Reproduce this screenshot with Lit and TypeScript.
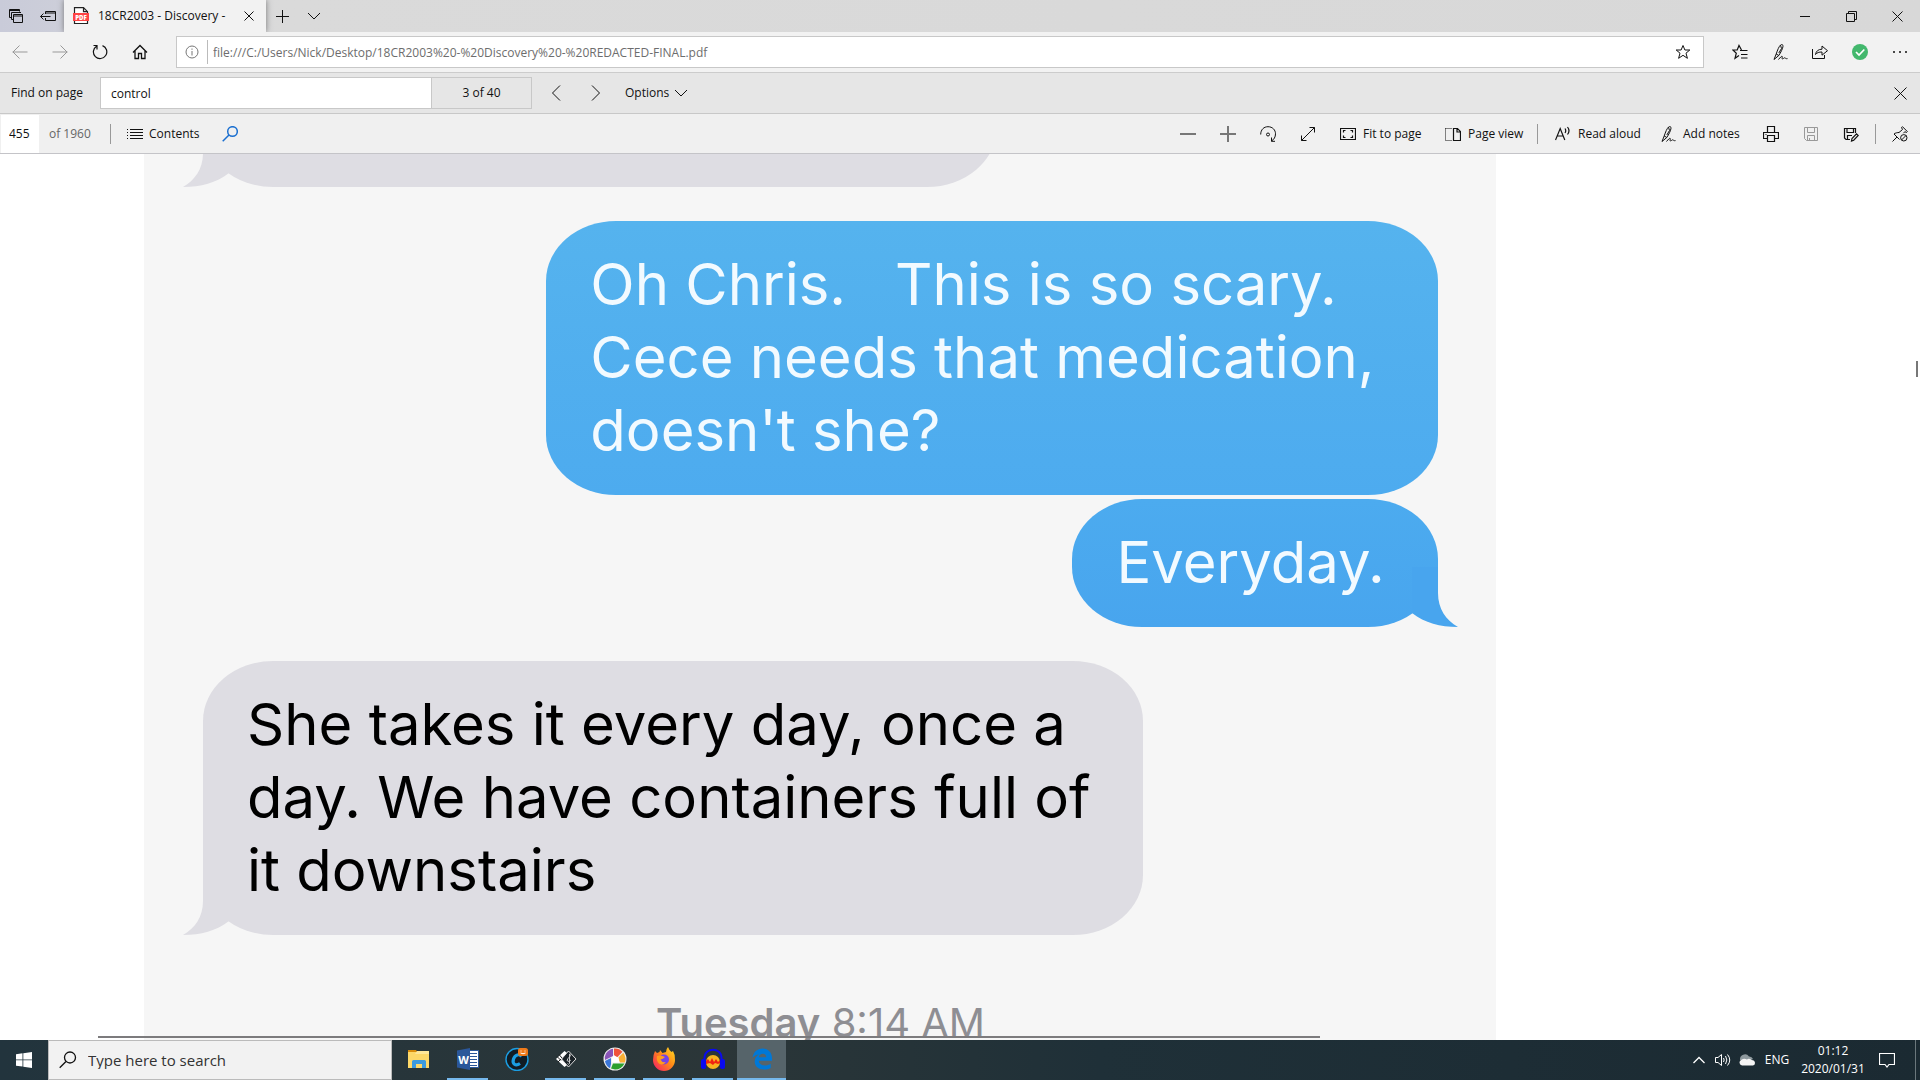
import { LitElement, html, css, svg } from "lit";
import { customElement } from "lit/decorators.js";

const line = (size: number, body: unknown, cls = "") => html`<svg
  class="ico ${cls}"
  width=${size}
  height=${size}
  viewBox="0 0 ${size} ${size}"
  aria-hidden="true"
>${body}</svg>`;

const cross = (s: number) => line(s, svg`<path d="M.5 .5L${s - 0.5} ${s - 0.5}M${s - 0.5} .5L.5 ${s - 0.5}"/>`);

const penPath = svg`<path d="M2 15.5L4.2 10C5.5 6 7 2.4 8.6 1C9.8 .1 11.2 .6 11 2.2C10.8 4.6 8.8 8.4 6.8 11.5L2 15.5M4.2 10L6.8 11.5M8.5 1.2L9.5 4.5L6.8 9"/><path d="M6.5 15.5C8.5 13.2 9.7 11.8 10.2 12.4C10.7 13 9.6 14.4 10.3 14.9C11 15.4 12 13.6 12.8 13.8C13.5 14 13.8 15 15.5 14.6"/>`;

const icons = {
  cascade: line(16, svg`<path d="M3.5 9.5H1.5V1.5H11.5V3.5M1.5 2.5H11.5M5.5 11.5H3.5V4.500H13M5.5 6.5H14.5V14.5H5.5ZM5.5 8H14.5"/>`),
  aside: line(16, svg`<path d="M5.5 6V3.5H15.5V12.5H5.5V10M5.5 5H15.5M.5 8.5H10.5M3.5 5.5L.5 8.5L3.5 11.5"/>`),
  plus: line(14, svg`<path d="M7.5 1V14M1 7.5H14"/>`),
  chevDown: line(14, svg`<path d="M1 4L7 10L13 4"/>`),
  min: line(11, svg`<path d="M0 5.5H10"/>`),
  restore: line(11, svg`<path d="M.5 2.5H8.5V10.5H.5ZM2.5 2.5V.5H10.5V8.5H8.5"/>`),
  back: line(16, svg`<path d="M.5 8H15.5M7.5 1.5L1 8L7.5 14.5"/>`, "dim"),
  fwd: line(16, svg`<path d="M.5 8H15.5M8.5 1.5L15 8L8.5 14.5"/>`, "dim"),
  refresh: line(16, svg`<path d="M4.5 2.2A6.7 6.7 0 1 0 10.5 1.6M1.5 1.5H5V5.5" stroke-width="1.2"/>`),
  home: line(16, svg`<path d="M1 8.5L8 1.5L15 8.5M3 7V14.5H6.5V9.5H9.5V14.5H13V7" stroke-width="1.3"/>`),
  info: line(14, svg`<circle cx="7" cy="7" r="6"/><path d="M7 6V10.5M7 3.5V4.8"/>`),
  star: line(16, svg`<path d="M8 1.5L9.9 6H14.8L11 9.2L12.4 14.3L8 11.3L3.6 14.3L5 9.2L1.2 6H6.1Z"/>`),
  favs: line(16, svg`<path d="M9.5 6L7 1.5L5.2 6H.8L4.3 9.2L3 14.3L7 11.6M8 6.5H15.5M9 10.5H15.5M9 14H15.5" stroke-width="1.2"/>`),
  pen: line(16, penPath),
  share: line(16, svg`<path d="M.5 5V14.5H12.5V11M3.5 10.5C4 7 6.5 5.2 10 5.2V2L15.5 6.7L10 11.2V8C7 8 5 8.6 3.5 10.5Z"/>`),
  shield: html`<svg width="16" height="16" viewBox="0 0 16 16" aria-hidden="true"><circle cx="8" cy="8" r="8" fill="#43b86d"/><path d="M4 8L7 11L12.3 5.5" fill="none" stroke="#fff" stroke-width="1.7"/></svg>`,
  more: line(16, svg`<path d="M1 8H3M7 8H9M13 8H15" stroke-width="1.7"/>`),
  prev: line(16, svg`<path d="M12 .5L4.5 8L12 15.5"/>`),
  next: line(16, svg`<path d="M4 .5L11.5 8L4 15.5"/>`),
  list: line(16, svg`<path d="M3 3.5H16M3 6.5H16M3 9.5H16M3 12.5H16M0 3.5H1M0 6.5H1M0 9.5H1M0 12.5H1"/>`),
  find: line(16, svg`<circle cx="10.5" cy="5.5" r="4.8"/><path d="M7 9L.7 15.3"/>`, "blue"),
  zoomOut: line(16, svg`<path d="M0 8H16" stroke="#777" stroke-width="2"/>`),
  zoomIn: line(16, svg`<path d="M0 8H16M8 0V16" stroke="#777" stroke-width="2"/>`),
  rotate: line(16, svg`<path d="M.7 8.5C.7 3.5 4 .7 8 .7C12.5 .7 15.5 4 15.5 7.8C15.5 11 14 13.5 11.5 15M11.5 11.5V15.3H15"/><circle cx="8" cy="8.5" r="1.5"/>`),
  expand: line(16, svg`<path d="M1.5 14.5L14.5 1.5M9.5 1.5H14.5V6.5M1.5 9.5V14.5H6.5"/>`),
  fit: line(16, svg`<path d="M.5 2.5H15.5V13.5H.5ZM3.5 6.5V4.5H5.5M10.5 4.5H12.5V6.5M12.5 9.5V11.5H10.5M5.5 11.5H3.5V9.5" stroke-width="1.2"/>`),
  pageView: line(16, svg`<path d="M.5 2.5H7M.5 2.5V14.5H7" stroke-dasharray="1 1"/><path d="M8.5 2.5H12.5L15.5 5.5V14.5H8.5ZM12 2.5V6H15.5" stroke-width="1.2"/>`),
  readAloud: line(16, svg`<path d="M.5 14L5.2 2.5L9.8 14M2.3 10H8.2M10 2.5C11 4 11 5.5 10 7M12.5 1C14.5 3.5 14.5 6 12.5 8.5" stroke-width="1.2"/>`),
  print: line(16, svg`<path d="M4.5 6.5V.5H11.5V6.5M4 12.5H.5V6.5H15.5V12.5H12M4.5 9.5H11.5V15.5H4.5ZM2.5 8.5H3.5" stroke-width="1.2"/>`),
  save: line(16, svg`<path d="M1.5 1.5H14.5V14.5H3.5L1.5 12.5ZM4.5 1.5V6.5H11.5V1.5M4.5 14.5V9.5H11.5V14.5M6.5 12V14.5"/>`, "dim"),
  saveAs: line(16, svg`<path d="M7 13.5H3L1.5 12V2.5H12.5V7M4 2.5V6.5H10.5V2.5M4.5 13.5V9.5H9M8.5 15L9 12.5L13.5 7.8L15.2 9.5L10.7 14.2Z" stroke-width="1.2"/>`),
  unpin: line(16, svg`<path d="M.5 15.5L5 11M2 8L7.5 13.5M2 8C3.5 6.800 5.500 6.500 7 6.500L10.500 3.500L9.500 1.500L10.500 .7L15.300 5.500L14.500 6.500L12.800 5.700L11.500 7.200"/><circle cx="11.8" cy="11.8" r="3.2"/><path d="M9.5 14L14 9.5"/>`),
  pdf: html`<svg width="16" height="18" viewBox="0 0 16 18" aria-hidden="true"><path d="M1.5 .7H10.5L14.5 4.7V16.5H1.5ZM10.5 .7V4.7H14.5" fill="#fff" stroke="#222" stroke-width="1.2"/><rect y="6" width="16" height="8" fill="#f44"/><text x="8" y="12.5" text-anchor="middle" font-family="Open Sans, sans-serif" font-weight="800" font-size="6" fill="#fff">PDF</text></svg>`,
};

const taskIcons = {
  start: html`<svg width="16" height="16" viewBox="0 0 16 16" aria-hidden="true"><path fill="#fff" d="M0 2.2L6.5 1.3V7.5H0ZM7.3 1.2L16 0V7.5H7.3ZM0 8.3H6.5V14.6L0 13.7ZM7.3 8.3H16V16L7.3 14.7Z"/></svg>`,
  glass: html`<svg class="ico" width="18" height="18" viewBox="0 0 18 18" aria-hidden="true"><circle cx="11" cy="6.5" r="5.5" stroke-width="1.3"/><path d="M7 10.5L.7 16.8" stroke-width="1.3"/></svg>`,
  explorer: html`<svg width="24" height="24" viewBox="0 0 24 24" aria-hidden="true"><path fill="#d98d0c" d="M1 3H9L10.5 5H1Z"/><path fill="#fdd868" d="M1 5H22V21H1Z"/><path fill="#ffe798" d="M10 4H22V7H8Z"/><path fill="#3b9ade" d="M5 21V14.5Q5 13 6.5 13H17.5Q19 13 19 14.5V21H15V17H9V21Z"/></svg>`,
  word: html`<svg width="24" height="24" viewBox="0 0 24 24" aria-hidden="true"><path fill="#fff" stroke="#2b579a" d="M12 3.5H22.5V20.5H12Z"/><path stroke="#2b579a" d="M14 6.5H21M14 9.5H21M14 12.5H21M14 15.5H21M14 18.5H21"/><path fill="#2b579a" d="M1 3.5L14 1V23L1 20.5Z"/><text x="7.5" y="16.5" text-anchor="middle" font-family="Open Sans, sans-serif" font-size="11" font-weight="700" fill="#fff">W</text></svg>`,
  ccleaner: html`<svg width="24" height="24" viewBox="0 0 24 24" aria-hidden="true"><circle cx="12" cy="12.5" r="11" fill="#111c24" stroke="#1b9de2" stroke-width="1.4"/><path d="M16.5 9.5C14.5 6.5 10 7.5 8.5 12C7 17 10.5 19.5 15 16.5" fill="none" stroke="#1b9de2" stroke-width="3.2"/><rect x="13" y="1" width="10" height="8" rx="2.5" fill="#ef7a1a"/><path d="M15.5 6Q18 7.5 20.5 6M16 3.5V4.5M20 3.5V4.5" fill="none" stroke="#fff"/></svg>`,
  keys: html`<svg width="24" height="24" viewBox="0 0 24 24" aria-hidden="true"><path fill="#fff" d="M2 12L10.5 4L13 6L8.5 12L13 18L10.5 20Z"/><path d="M3 9.5L7 13.5M5 7.5L8 11M4 15L7 12" stroke="#222"/><path fill="#1a2227" stroke="#dedede" d="M14.5 4L22 12L14.5 20L7.5 12Z"/><path d="M15.5 7V16.5Q14.5 18 13.5 16.5M15.5 7Q18 8 14 11.5Q11.5 14 15 14.5Q18 13.5 15 12" fill="none" stroke="#ccc"/></svg>`,
  picasa: html`<svg width="24" height="24" viewBox="0 0 24 24" aria-hidden="true"><circle cx="12" cy="12" r="11.5" fill="#eee"/><path fill="#8a55b8" d="M3 6.5A10.5 10.5 0 0 1 10 1.7V9L2 13Q1.3 9.5 3 6.5Z"/><path fill="#f0533a" d="M11 1.5Q16 1 19.5 4.8L14 10.5L11 8Z"/><path fill="#fbb034" d="M20.3 5.7Q23.5 10.5 22 15.5H17L15 11Z"/><path fill="#2ba02d" d="M21.5 16.5Q18.5 22.5 12 22.5L8 21.5L10 16.5Z"/><path fill="#3a76d8" d="M7 21.2Q2.8 19 2 14L8 11V17Z"/><path fill="#fff" d="M10.5 8.5L15.5 10.5L16.5 15.5H9V11Z"/></svg>`,
  firefox: html`<svg width="24" height="24" viewBox="0 0 24 24" aria-hidden="true"><defs><linearGradient id="ff" x1="1" y1="0" x2="0" y2="1"><stop offset="0" stop-color="#ffe226"/><stop offset=".45" stop-color="#ff8a16"/><stop offset="1" stop-color="#f5156c"/></linearGradient></defs><path fill="url(#ff)" d="M3 4L5 6L7.5 5L8 3L10.5 6L14 5Q14 2 16 0Q17 3 19.5 5L21 4Q23.5 8 23 13A11 11 0 0 1 1 13Q1 8 3 4Z"/><circle cx="12" cy="12.5" r="5" fill="#7542e5"/><path fill="#ff9b1c" d="M5 9Q9 7.5 13 10Q11 12 8.5 12.5Q10 16 14 15Q11 19 7 16.5Q4 13.5 5 9Z"/></svg>`,
  audacity: html`<svg width="24" height="24" viewBox="0 0 24 24" aria-hidden="true"><ellipse cx="12" cy="15" rx="7" ry="7" fill="#f7b520"/><path d="M5 14L7 12L9 15L11 11L13 15L15 12L17 15L19 13V16L17 17L14 16L12 18L9 16L5 17Z" fill="#ef2412"/><path d="M3.5 14V11C3.5 0 20.5 0 20.5 11V14" fill="none" stroke="#0a0af0" stroke-width="2"/><rect x="0" y="12" width="5" height="10" rx="2" fill="#0a0af0"/><rect x="19" y="12" width="5" height="10" rx="2" fill="#0a0af0"/></svg>`,
  edge: html`<svg width="24" height="24" viewBox="0 0 24 24" aria-hidden="true"><path fill="#0078d7" d="M2.5 10.8C3.5 5 7.2 1.5 12.6 1.5C18.5 1.5 22 6 22 11.3V13.8H8.8C9 17 11.7 18.5 14.8 18.5C17 18.5 19 17.8 20.7 16.7V21C18.8 22 16.6 22.5 14 22.5C8.4 22.5 4.7 19.3 4.7 14.5C4.7 11.3 6.3 8.8 9 7.5C6.3 7.8 4 8.9 2.5 10.8ZM8.9 10.3H16.3C16.2 7.9 15 6.7 12.8 6.7C10.7 6.7 9.3 8.1 8.9 10.3Z"/></svg>`,
};

const tasks = [
  { name: "File Explorer", icon: taskIcons.explorer, open: false },
  { name: "Word", icon: taskIcons.word, open: true },
  { name: "CCleaner", icon: taskIcons.ccleaner, open: false },
  { name: "Score editor", icon: taskIcons.keys, open: true },
  { name: "Picasa", icon: taskIcons.picasa, open: true },
  { name: "Firefox", icon: taskIcons.firefox, open: true },
  { name: "Audacity", icon: taskIcons.audacity, open: true },
  { name: "Edge", icon: taskIcons.edge, open: true, active: true },
];

const base = css`
  * { box-sizing: border-box; }
  button, input { font: inherit; color: inherit; border: 0; margin: 0; padding: 0; background: none; border-radius: 0; outline: 0; }
  button { display: flex; align-items: center; justify-content: center; flex: none; white-space: nowrap; }
  svg { display: block; flex: none; }
  .ico { fill: none; stroke: #111; stroke-width: 1; }
  .dim { stroke: #999; }
  .blue { stroke: #1a6fd0; stroke-width: 1.5; }
  .grow { flex: 1; }
`;

@customElement("browser-chrome")
export class BrowserChrome extends LitElement {
  static styles = [base, css`
    :host { display: block; font-size: 12px; line-height: 16px; color: #111; }
    .tabs { display: flex; height: 32px; background: linear-gradient(90deg, #c9cbd9, #dadada 280px, #d8d8d8); }
    .tabs .sys { width: 32px; }
    .tabs .wide { width: 46px; }
    .tab { display: flex; align-items: center; width: 202px; padding: 0 12px 0 9px; gap: 9px; background: #f2f2f2; box-shadow: 0 0 6px #777; clip-path: inset(0 -8px 0 -8px); }
    .title { flex: 1; white-space: nowrap; overflow: hidden; }
    .nav { display: flex; align-items: center; height: 41px; background: #f2f2f2; border-bottom: 1px solid #ccc; }
    .sq { width: 40px; height: 40px; }
    .url { flex: 1; display: flex; align-items: center; height: 32px; margin: 0 16px; background: #fff; border: 1px solid #c8c8c8; }
    .url .info { width: 30px; }
    .url .info .ico { stroke: #777; }
    .url input { flex: 1; min-width: 0; height: 24px; padding: 0 5px; border-left: 1px solid #bbb; color: #6d6d6d; }
    .url .fav { width: 40px; }
    .find { display: flex; align-items: center; height: 41px; background: #e6e6e6; border-bottom: 1px solid #c8c8c8; }
    .find label { width: 100px; padding-left: 11px; white-space: nowrap; }
    .find input { width: 332px; height: 32px; padding: 0 10px; background: #fff; border: 1px solid #c8c8c8; }
    .count { width: 100px; height: 32px; line-height: 30px; text-align: center; border: 1px solid #c8c8c8; border-left: 0; margin-right: 4px; }
    .options { gap: 5px; padding: 0 9px; }
    .tools { display: flex; align-items: center; height: 40px; background: #f0f0f0; border-bottom: 1px solid #c4c4c8; }
    .tools input { width: 38px; height: 38px; margin-left: 1px; padding-left: 8px; background: #fff; }
    .total { width: 71px; padding-left: 10px; color: #666; }
    .rule { width: 1px; height: 20px; background: #999; }
    .labelled { gap: 7px; height: 38px; padding-left: 12px; justify-content: flex-start; }
    .contents { width: 99px; padding-left: 16px; gap: 6px; }
    .fit { width: 105px; }
    .view { width: 104px; }
    .read { width: 105px; }
    .notes { width: 103px; }
    .gapped { margin: 0 4px; }
    .before { margin-right: 5px; }
  `];

  render() {
    return html`
      <div class="tabs">
        <button class="sys" aria-label="Tabs set aside">${icons.cascade}</button>
        <button class="sys" aria-label="Set tabs aside">${icons.aside}</button>
        <div class="tab">${icons.pdf}<span class="title">18CR2003 - Discovery -</span>
          <button aria-label="Close tab">${cross(10)}</button></div>
        <button class="sys" aria-label="New tab">${icons.plus}</button>
        <button class="sys" aria-label="Tab previews">${icons.chevDown}</button>
        <span class="grow"></span>
        <button class="wide" aria-label="Minimise">${icons.min}</button>
        <button class="wide" aria-label="Restore">${icons.restore}</button>
        <button class="wide" aria-label="Close">${cross(11)}</button>
      </div>
      <div class="nav">
        <button class="sq" aria-label="Back">${icons.back}</button>
        <button class="sq" aria-label="Forward">${icons.fwd}</button>
        <button class="sq" aria-label="Refresh">${icons.refresh}</button>
        <button class="sq" aria-label="Home">${icons.home}</button>
        <div class="url">
          <button class="info" aria-label="Site information">${icons.info}</button>
          <input aria-label="Address" value="file:///C:/Users/Nick/Desktop/18CR2003%20-%20Discovery%20-%20REDACTED-FINAL.pdf" />
          <button class="fav" aria-label="Add to favourites">${icons.star}</button>
        </div>
        <button class="sq" aria-label="Favourites">${icons.favs}</button>
        <button class="sq" aria-label="Add notes">${icons.pen}</button>
        <button class="sq" aria-label="Share">${icons.share}</button>
        <button class="sq" aria-label="Protection">${icons.shield}</button>
        <button class="sq" aria-label="More">${icons.more}</button>
      </div>
      <div class="find">
        <label for="q">Find on page</label><input id="q" value="control" />
        <span class="count">3 of 40</span>
        <button class="sq" aria-label="Previous result">${icons.prev}</button>
        <button class="sq" aria-label="Next result">${icons.next}</button>
        <button class="options">Options ${icons.chevDown}</button>
        <span class="grow"></span>
        <button class="sq" aria-label="Close find bar">${cross(13)}</button>
      </div>
      <div class="tools">
        <input aria-label="Page number" value="455" /><span class="total">of 1960</span>
        <span class="rule"></span>
        <button class="labelled contents">${icons.list}Contents</button>
        <button class="sq" aria-label="Search">${icons.find}</button>
        <span class="grow"></span>
        <button class="sq" aria-label="Zoom out">${icons.zoomOut}</button>
        <button class="sq" aria-label="Zoom in">${icons.zoomIn}</button>
        <button class="sq" aria-label="Rotate">${icons.rotate}</button>
        <button class="sq" aria-label="Full screen">${icons.expand}</button>
        <button class="labelled fit">${icons.fit}Fit to page</button>
        <button class="labelled view">${icons.pageView}Page view</button>
        <span class="rule before"></span>
        <button class="labelled read">${icons.readAloud}Read aloud</button>
        <button class="labelled notes">${icons.pen}Add notes</button>
        <button class="sq" aria-label="Print">${icons.print}</button>
        <button class="sq" aria-label="Save">${icons.save}</button>
        <button class="sq" aria-label="Save as">${icons.saveAs}</button>
        <span class="rule gapped"></span>
        <button class="sq" aria-label="Unpin toolbar">${icons.unpin}</button>
      </div>`;
  }
}

@customElement("pdf-page")
export class PdfPage extends LitElement {
  static styles = [base, css`
    :host { display: block; position: relative; overflow: hidden; background: #fff; }
    .page { display: flex; flex-direction: column; height: 100%; margin: 0 424px 0 144px; padding: 0 58px 0 59px; background: #f6f6f6; font-family: Inter, "Liberation Sans", sans-serif; font-size: 58px; line-height: 73px; }
    .bubble { position: relative; flex: none; margin: 0 0 34px; padding: 27px 0 28px 44px; border-radius: 70px / 60px; white-space: pre; }
    .them { align-self: flex-start; background: #dedde3; color: #000; }
    .me { align-self: flex-end; background: linear-gradient(#55b3ee, #4dabef); color: #f2faff; }
    .above { width: 64.3%; height: 128px; margin-top: -95px; }
    .question { width: 72.2%; margin-bottom: 4px; }
    .reply { width: 29.6%; background: linear-gradient(#4cabef, #48a5ee); }
    .answer { width: 76.1%; }
    .tail { position: absolute; bottom: 0; left: -20px; fill: #dedde3; }
    .reply .tail { left: auto; right: -20px; fill: #48a5ee; transform: scaleX(-1); }
    .stamp { flex: none; margin: 17px 0 0; text-align: center; color: #8e8e93; font-size: 40px; white-space: nowrap; }
    .stamp strong { font-weight: 600; }
    .edge { position: absolute; left: 98px; right: 600px; bottom: 2px; height: 2px; background: #7c7b7d; }
    .thumb { position: absolute; right: 2px; top: 207px; width: 2px; height: 16px; background: #777; }
  `];

  private tail() {
    return html`<svg class="tail" width="46" height="60" viewBox="0 0 46 60" aria-hidden="true"><path d="M20 0V26C20 42 12 53 0 60C18 60 33 56 46 46V0Z"/></svg>`;
  }

  render() {
    return html`
      <div class="page">
        <div class="bubble them above">${this.tail()}</div>
        <p class="bubble me question">Oh Chris.   This is so scary.
Cece needs that medication,
doesn't she?</p>
        <p class="bubble me reply">Everyday.${this.tail()}</p>
        <p class="bubble them answer">She takes it every day, once a
day. We have containers full of
it downstairs${this.tail()}</p>
        <p class="stamp"><strong>Tuesday</strong> 8:14 AM</p>
      </div>
      <div class="edge"></div>
      <div class="thumb"></div>`;
  }
}

@customElement("task-bar")
export class TaskBar extends LitElement {
  static styles = [base, css`
    :host { display: flex; height: 40px; background: linear-gradient(90deg, #22343d, #2b3638 720px, #1f3038 1100px, #1b2a32); color: #fff; font-size: 12px; line-height: 18px; }
    .start { width: 48px; }
    .search { display: flex; align-items: center; width: 344px; padding-left: 10px; gap: 11px; margin-right: 2px; background: #f2f2f2; border: 1px solid #bbb; }
    .search input { flex: 1; min-width: 0; font-size: 15px; color: #333; }
    .search input::placeholder { color: #333; opacity: 1; }
    .task { width: 49px; padding: 0 4px; flex-direction: column; justify-content: space-between; }
    .task .mark { width: 41px; height: 2px; }
    .task svg { margin-top: 7px; }
    .open .mark { background: #76b9ed; }
    .active { padding: 0; background: #56646a; }
    .active .mark { width: 100%; }
    .tray { width: 24px; }
    .tray .ico, .note .ico { stroke: #fff; }
    .lang { width: 36px; }
    .clock { width: 76px; text-align: center; }
    .note { width: 32px; margin-right: 12px; }
    .show { width: 5px; border-left: 1px solid #6b777c; }
  `];

  render() {
    return html`
      <button class="start" aria-label="Start">${taskIcons.start}</button>
      <div class="search">${taskIcons.glass}<input aria-label="Search" placeholder="Type here to search" /></div>
      ${tasks.map((t) => html`<button class="task ${t.open ? "open" : ""} ${t.active ? "active" : ""}" aria-label=${t.name}>${t.icon}<span class="mark"></span></button>`)}
      <span class="grow"></span>
      <button class="tray" aria-label="Hidden icons">${line(14, svg`<path d="M1.5 10L7 4.5L12.5 10" stroke-width="1.3"/>`)}</button>
      <button class="tray" aria-label="Volume">${line(16, svg`<path d="M.5 5.5H3L6.5 2.5V13.5L3 10.5H.5ZM8.5 6Q9.8 8 8.5 10M10.5 4Q13.2 8 10.5 12M12.5 2.5Q17 8 12.5 13.5"/>`)}</button>
      <button class="tray" aria-label="OneDrive"><svg width="16" height="12" viewBox="0 0 16 12" aria-hidden="true"><path fill="#8e999e" d="M1 6A5 5 0 0 1 10 2.5A4 4 0 0 1 14 5L8 8Z"/><path fill="#f4f4f4" d="M3 11.5A3 3 0 0 1 2.5 5.7Q5 4 8 5.5Q10 3.8 12.5 6Q15.8 6 16 9Q16 11 14 11.5Z"/></svg></button>
      <button class="lang">ENG</button>
      <button class="clock"><span>01:12<br />2020/01/31</span></button>
      <button class="note" aria-label="Notifications">${line(16, svg`<path d="M.5 1.5H15.5V12.5H10L8 15L6 12.5H.5Z" stroke-width="1.2"/>`)}</button>
      <button class="show" aria-label="Show desktop"></button>`;
  }
}

@customElement("app-root")
export class AppRoot extends LitElement {
  static styles = css`
    :host { display: flex; flex-direction: column; height: 100vh; font-family: "Open Sans", "Noto Sans", sans-serif; overflow: hidden; }
    browser-chrome, task-bar { flex: none; }
    pdf-page { flex: 1; min-height: 0; }
  `;
  render() {
    return html`<browser-chrome></browser-chrome><pdf-page></pdf-page><task-bar></task-bar>`;
  }
}
